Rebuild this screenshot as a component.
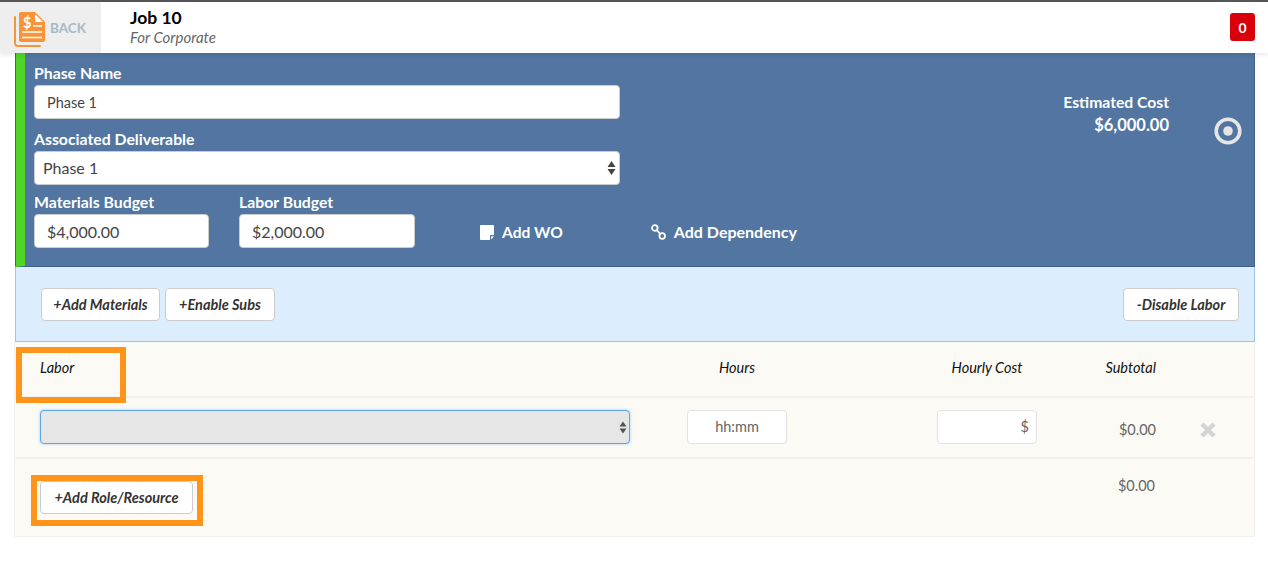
<script>
  const columns = ['Hours', 'Hourly Cost', 'Subtotal'];
</script>

<div class="page">
  <header class="topbar">
    <div class="back">
      <svg class="doc" width="32" height="35" viewBox="0 0 32 35">
        <path d="M1 5 V31 a3 3 0 0 0 3 3 H26" fill="none" stroke="#f7943a" stroke-width="2" stroke-linecap="round"/>
        <path d="M5 2 a2 2 0 0 1 2-2 H21 L31 10 V28 a2 2 0 0 1-2 2 H7 a2 2 0 0 1-2-2 Z" fill="#f7943a"/>
        <path d="M21 2 L29 10 H21 Z" fill="#fff"/>
        <text x="9" y="16" class="dollar">$</text>
        <path d="M8 20 H28 M8 25.5 H28 M19 14 H28" stroke="#fff" stroke-width="1.4"/>
      </svg>
      <span>BACK</span>
    </div>
    <div class="title">
      <div class="job">Job 10</div>
      <div class="sub">For Corporate</div>
    </div>
    <div class="badge">0</div>
  </header>

  <section class="phase">
    <div class="fields">
      <label for="pn">Phase Name</label>
      <input id="pn" class="wide small" value="Phase 1" />
      <label for="ad">Associated Deliverable</label>
      <div class="select wide"><span>Phase 1</span>
        <svg width="9" height="16" viewBox="0 0 9 16"><path d="M4.5 1 L8.5 7 H.5 Z M.5 9 H8.5 L4.5 15 Z" fill="#444"/></svg>
      </div>
      <div class="budgets">
        <div class="budget one">
          <label for="mb">Materials Budget</label>
          <input id="mb" value="$4,000.00" />
        </div>
        <div class="budget two">
          <label for="lb">Labor Budget</label>
          <input id="lb" value="$2,000.00" />
        </div>
        <div class="action wo">
          <svg width="14" height="15" viewBox="0 0 14 15"><path d="M1 0 H13 a1 1 0 0 1 1 1 V10 H10.5 a.5 .5 0 0 0-.5 .5 V15 H1 a1 1 0 0 1-1-1 V1 a1 1 0 0 1 1-1 Z" fill="#fff"/><path d="M11.2 11.2 H14 L11.2 14.4 Z" fill="#fff"/></svg>
          <span>Add WO</span>
        </div>
        <div class="action dep">
          <svg width="15" height="16" viewBox="0 0 15 16" fill="none" stroke="#fff" stroke-width="1.8"><circle cx="3.8" cy="4" r="2.8"/><circle cx="11.2" cy="12" r="2.8"/><path d="M5.8 6 L9.2 10"/></svg>
          <span>Add Dependency</span>
        </div>
      </div>
    </div>
    <div class="cost">
      <div>Estimated Cost</div>
      <div class="amount">$6,000.00</div>
    </div>
    <svg class="radio" width="28" height="28" viewBox="0 0 28 28"><circle cx="14" cy="14" r="11.8" fill="none" stroke="#e6e6e6" stroke-width="3.6"/><circle cx="14" cy="14" r="4.8" fill="#e6e6e6"/></svg>
  </section>

  <section class="toggles">
    <button class="b1">+Add Materials</button>
    <button class="b2">+Enable Subs</button>
    <button class="b3">-Disable Labor</button>
  </section>

  <section class="labor">
    <div class="row head">
      <div class="c-name">Labor</div>
      <div class="c-hours">{columns[0]}</div>
      <div class="c-cost">{columns[1]}</div>
      <div class="c-sub">{columns[2]}</div>
    </div>
    <div class="row item">
      <div class="c-name">
        <div class="focus">
          <svg width="8" height="13" viewBox="0 0 8 13"><path d="M4 .5 L7.5 5.5 H.5 Z M.5 7.5 H7.5 L4 12.5 Z" fill="#555"/></svg>
        </div>
      </div>
      <div class="c-hours"><div class="mini">hh:mm</div></div>
      <div class="c-cost"><div class="mini dollar-in">$</div></div>
      <div class="c-sub money">$0.00</div>
      <svg class="x" width="16" height="16" viewBox="0 0 16 16"><path d="M2 2 L14 14 M14 2 L2 14" stroke="#d2d6d6" stroke-width="4.4"/></svg>
    </div>
    <div class="row foot">
      <div class="c-name"><button class="add">+Add Role/Resource</button></div>
      <div class="total money">$0.00</div>
    </div>
    <div class="mark m1"></div>
    <div class="mark m2"></div>
  </section>
</div>

<style>
  :global(body) { margin: 0; background: #fff; }
  .page {
    width: 1268px; height: 570px; overflow: hidden; box-sizing: border-box;
    border-top: 2px solid #555;
    font-family: "Lato", "Liberation Sans", sans-serif;
    color: #333;
  }
  .topbar {
    position: relative; z-index: 2;
    height: 51px; display: flex; align-items: stretch;
    background: #fff; box-shadow: 0 1px 5px rgba(0,0,0,.12);
  }
  .back {
    width: 101px; background: #eee; display: flex; align-items: center;
    padding-left: 14px; box-sizing: border-box; gap: 4px;
    color: #a3bac7; font-size: 13.5px; font-weight: 700;
  }
  .doc { flex: none; margin-top: 3px; }
  .dollar { font: 700 14.5px "Lato", sans-serif; fill: #fff; }
  .title { margin-left: 29px; padding-top: 6px; }
  .job { font-size: 17.5px; font-weight: 700; color: #000; line-height: 20px; }
  .sub { font-size: 15px; font-style: italic; color: #666; line-height: 18px; }
  .badge {
    margin: 11px 13px 0 auto; width: 25px; height: 28px; border-radius: 3px;
    background: #d9000b; color: #fff; font-size: 14px; font-weight: 700;
    display: flex; align-items: center; justify-content: center;
  }

  .phase {
    position: relative; box-sizing: border-box;
    margin-left: 15px; width: 1240px; height: 214px;
    background: #5276a1;
    border-left: 10px solid #4fd526;
    border-right: 1px solid #3f618c; border-bottom: 1px solid #3f618c;
    display: flex; color: #fff;
  }
  .phase::before { content: ""; position: absolute; left: -10px; top: 0; bottom: 0; width: 1px; background: #3f618c; }
  .fields { padding: 10px 0 0 9px; width: 820px; }
  label {
    display: block; font-size: 15.8px; font-weight: 700; line-height: 20px;
    color: #fff;
  }
  input, .select {
    box-sizing: border-box; display: block; height: 34px; border: 1px solid #ccc;
    border-radius: 4px; background: #fff; font-family: inherit; font-size: 16px;
    color: #444; padding: 0 0 0 12px; outline: none;
  }
  .wide { width: 586px; }
  .small { font-size: 14.5px; margin: 2px 0 10px; }
  .select {
    display: flex; align-items: center; justify-content: space-between;
    padding: 0 3px 2px 8px; font-size: 16px; margin-top: 2px;
  }
  .select svg { margin-top: 2px; }
  .budgets { display: flex; align-items: flex-end; margin-top: 7px; }
  .budget input { width: 100%; margin-top: 2px; }
  .budget.one { width: 175px; margin-right: 30px; }
  .budget.two { width: 176px; }
  .action { display: flex; align-items: center; height: 36px; margin-bottom: -2px; font-weight: 700; color: #fff; }
  .wo { margin-left: 65px; gap: 8px; font-size: 15.6px; }
  .dep { margin-left: 88px; gap: 8px; font-size: 16px; height: 35px; margin-bottom: -1px; }
  .cost {
    position: absolute; right: 85px; top: 38px; text-align: right;
    font-size: 15.7px; font-weight: 700; line-height: 23px;
  }
  .amount { font-size: 16.5px; }
  .radio { position: absolute; left: 1189px; top: 64px; }

  .toggles {
    box-sizing: border-box; margin-left: 15px; width: 1240px; height: 75px;
    background: #dcedfd; border: 1px solid #9cc6ea; border-top: 0;
    display: flex; align-items: center; gap: 5px; padding: 0 15px 0 25px;
  }
  button {
    box-sizing: border-box; height: 33px; border: 1px solid #ccc; border-radius: 4px;
    background: #fff; padding: 0; font-family: inherit; font-size: 14.5px;
    font-style: italic; font-weight: 700; color: #333;
  }
  .b1 { width: 119px; }
  .b2 { width: 110px; }
  .b3 { width: 116px; margin-left: auto; }

  .labor {
    position: relative; box-sizing: border-box; margin-left: 14px; width: 1241px; height: 195px;
    background: #fbfaf4; border: 1px solid #f2f1ec; border-top: 0;
  }
  .row { display: flex; position: relative; box-sizing: border-box; border-bottom: 2px solid #f2f1ec; }
  .head { height: 56px; font-size: 14.5px; font-style: italic; color: #111; padding-top: 17px; }
  .c-name { width: 672px; padding-left: 25px; box-sizing: border-box; flex: none; }
  .c-hours { width: 100px; flex: none; text-align: center; }
  .c-cost { width: 100px; flex: none; margin-left: 150px; text-align: center; }
  .c-sub { width: 70px; flex: none; margin-left: 49px; text-align: right; }
  .item { height: 61px; align-items: flex-start; padding-top: 12px; }
  .focus {
    box-sizing: border-box; width: 590px; height: 34px; border-radius: 4px;
    background: #e6e6e6; border: 1px solid #5ba7e8; box-shadow: 0 0 3px rgba(91,167,232,.6);
    display: flex; align-items: center; justify-content: flex-end; padding-right: 2px;
  }
  .mini {
    box-sizing: border-box; width: 100px; height: 34px; border: 1px solid #e2e2e2; border-radius: 4px;
    background: #fff; font-size: 14.5px; color: #666; line-height: 32px; text-align: center;
  }
  .dollar-in { text-align: right; padding-right: 7px; }
  .money { font-size: 14.5px; color: #666; }
  .item .money { padding-top: 11px; }
  .x { position: absolute; left: 1185px; top: 24px; }
  .foot { height: 77px; border-bottom: 0; padding-top: 22px; }
  .add { width: 153px; height: 33px; }
  .total { position: absolute; left: 1102px; top: 18px; width: 38px; text-align: right; }
  .mark { position: absolute; border: 6px solid #ff9419; box-sizing: border-box; pointer-events: none; }
  .m1 { left: 1px; top: 5px; width: 110px; height: 56px; }
  .m2 { left: 16px; top: 133px; width: 172px; height: 51px; }
</style>
